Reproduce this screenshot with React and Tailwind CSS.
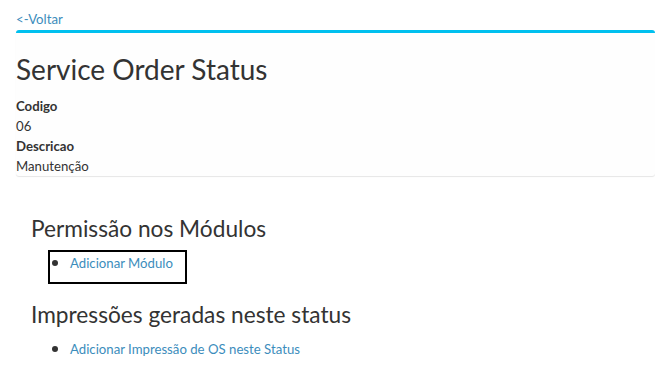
import React from "react";

const App = () => {
  return (
    <div
      className="min-h-[379px] bg-white text-[13.2px] leading-[20px] text-[#333]"
      style={{ fontFamily: "'Source Sans Pro', Lato, 'Liberation Sans', sans-serif" }}
    >
      {/* Back link */}
      <div className="pl-4 pt-[9px]">
        <a href="#" className="text-[#3c8dbc]">
          &lt;-Voltar
        </a>
      </div>

      {/* Status box */}
      <div className="mt-[1px] ml-4 rounded-[3px] border-t-[3px] border-[#00c0ef] bg-[#fefefe] shadow-[0_1px_1px_rgba(0,0,0,0.1)]">
        <h2 className="mt-5 mb-[10px] text-[28px] leading-[33px] font-normal">Service Order Status</h2>
        <dl>
          <dt className="font-bold">Codigo</dt>
          <dd>06</dd>
          <dt className="font-bold">Descricao</dt>
          <dd>Manutenção</dd>
        </dl>
      </div>

      {/* Modules */}
      <div className="pl-[31px] pt-5">
        <h3 className="mt-5 mb-2 text-[22.7px] leading-[26px] font-normal">Permissão nos Módulos</h3>
        <div className="ml-[17px] h-[34px] w-[139px] border-2 border-black">
          <ul className="list-disc pl-5 marker:text-[17px] marker:leading-[20px]">
            <li className="h-5">
              <a href="#" className="text-[#3c8dbc]">Adicionar Módulo</a>
            </li>
          </ul>
        </div>

        <h3 className="mt-[18px] mb-[10px] text-[22.7px] leading-[26px] font-normal">Impressões geradas neste status</h3>
        <ul className="list-disc pl-[39px] mb-[10px] marker:text-[17px] marker:leading-[20px]">
          <li className="h-5">
            <a href="#" className="text-[#3c8dbc]">Adicionar Impressão de OS neste Status</a>
          </li>
        </ul>
      </div>
    </div>
  );
};

export default App;
